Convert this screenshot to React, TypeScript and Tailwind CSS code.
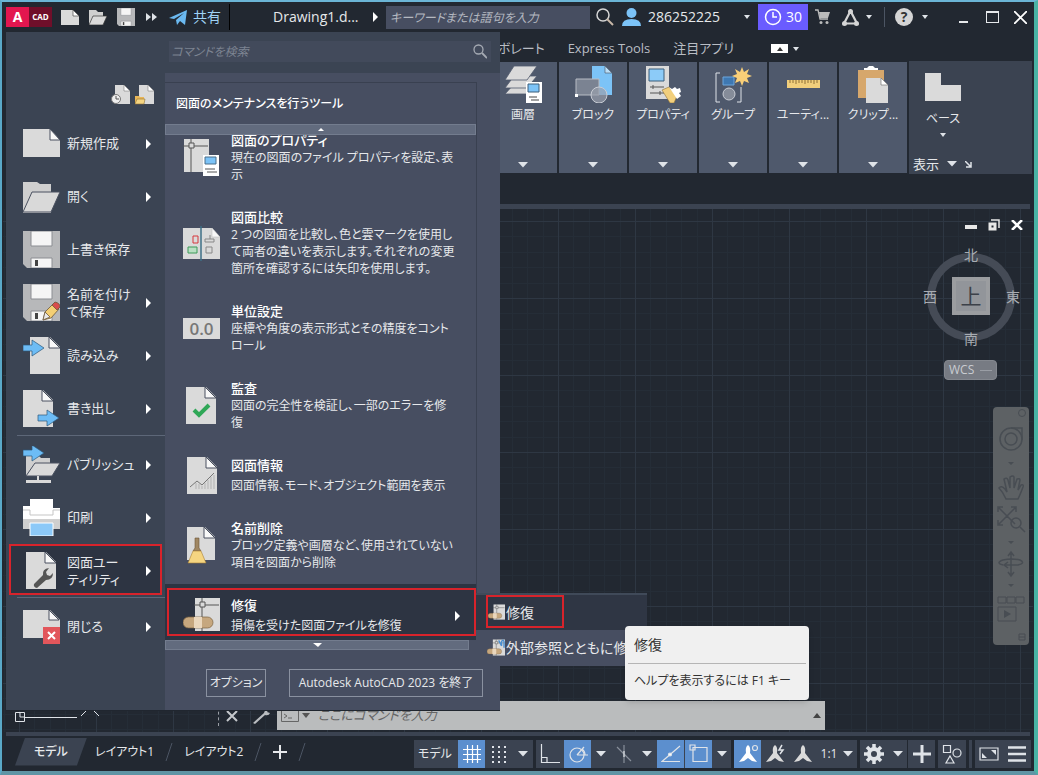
import type { ReactNode } from "react";

const RED = "pointer-events-none absolute border-2 border-[#d8232b]";

function Caret({ className = "" }: { className?: string }) {
  return (
    <svg viewBox="0 0 10 6" className={`h-[6px] w-[10px] shrink-0 ${className}`} aria-hidden="true">
      <path d="M0 0h10L5 5.5z" fill="#dfe3e8" />
    </svg>
  );
}

function SmallCaret() {
  return (
    <svg viewBox="0 0 6 4" className="h-1 w-1.5 shrink-0" aria-hidden="true">
      <path d="M0 0h6L3 4z" fill="#dfe3e8" />
    </svg>
  );
}

function Arrow({ className = "" }: { className?: string }) {
  return (
    <svg viewBox="0 0 5 10" className={`h-[10px] w-[5px] shrink-0 ${className}`} aria-hidden="true">
      <path d="M0 0l5 5-5 5z" fill="#fff" />
    </svg>
  );
}

function Svg({ size = 37, children }: { size?: number; children: ReactNode }) {
  return (
    <svg width={size} height={size} viewBox="0 0 37 37" className="shrink-0" aria-hidden="true">
      {children}
    </svg>
  );
}

/* Portrait sheet with a folded corner, shared by many icons */
function Sheet({ x = 3 }: { x?: number }) {
  return (
    <g transform={`translate(${x} 0)`}>
      <path d="M0 0h20l10 10v27H0z" fill="#dadada" />
      <path d="M19 0v11h11z" fill="#f8f8f8" stroke="#4a5160" strokeWidth="1" />
    </g>
  );
}

function NewIcon() {
  return (
    <Svg>
      <path d="M0 4h27l10 11v17H0z" fill="#dadada" />
      <path d="M27 4v11h10z" fill="#f8f8f8" stroke="#4a5160" />
    </Svg>
  );
}

function OpenIcon() {
  return (
    <Svg>
      <path d="M0 4h14l3 2h11v29H0z" fill="#cfcfcf" />
      <path d="M9 14h28l-9 20H0z" fill="#d9d9d9" stroke="#4a5160" />
    </Svg>
  );
}

function Disk() {
  return (
    <>
      <path d="M0 0h37v37H4l-4-4z" fill="#b7b8ba" />
      <path d="M8 0h21v15H8zM8 27h21v10H8z" fill="#f5f5f5" stroke="#8b8d92" />
      <path d="M12 29h3v6h-3z" fill="#444" />
    </>
  );
}

function Pencil() {
  return (
    <g stroke="#6b5638" strokeWidth=".8">
      <path d="M20 36l2-8 8-8 6 5-8 9z" fill="#f4cf73" />
      <path d="M20 36l2-8 5 5z" fill="#e9e9e9" />
      <path d="M29 21l3-3q5 1 5 5l-3 3z" fill="#d84b4b" />
    </g>
  );
}

function BlueArrow({ x, y }: { x: number; y: number }) {
  return (
    <path
      d="M0 5h9V0l12 8-12 8v-5H0z"
      transform={`translate(${x} ${y})`}
      fill="#6dbcf5"
      stroke="#2d5878"
      strokeWidth=".7"
    />
  );
}

function ImportIcon() {
  return (
    <Svg>
      <Sheet x={7} />
      <BlueArrow x={0} y={3} />
    </Svg>
  );
}

function ExportIcon() {
  return (
    <Svg>
      <Sheet x={0} />
      <BlueArrow x={15} y={20} />
    </Svg>
  );
}

function PublishIcon() {
  return (
    <Svg>
      <path d="M3 10h13l2 2h9v18H3z" fill="#cfcfcf" />
      <path d="M12 17h25l-8 13H3z" fill="#d9d9d9" stroke="#4a5160" />
      <path d="M3 34h25v3H3zM14 30h2v5h-2z" fill="#dadada" />
      <BlueArrow x={0} y={-1} />
    </Svg>
  );
}

function PrintIcon() {
  return (
    <Svg>
      <path d="M7 0h23v9h7v21H0V7h7z" fill="#fff" />
      <path d="M0 20h37v10H0z" fill="#cfcfcf" />
      <path d="M0 11h7v5h23v-5h7" fill="none" stroke="#c5c5c5" />
      <path d="M7 24h23v13H7z" fill="#8cc9f8" stroke="#fff" />
    </Svg>
  );
}

function WrenchIcon() {
  return (
    <Svg>
      <Sheet />
      <path d="M11 32l9-9q-1-6 6-7l-3 4 1 3 3 1 3-3q0 7-7 7l-9 8q-4-1-3-4z" fill="#555" />
    </Svg>
  );
}

function CloseIcon() {
  return (
    <Svg>
      <path d="M0 2h27l10 10v18H0z" fill="#dadada" />
      <path d="M26 2v10h10z" fill="#f8f8f8" stroke="#4a5160" />
      <path d="M20 19h17v17H20z" fill="#e2565b" />
      <path d="M25 24l7 7m0-7l-7 7" stroke="#fff" strokeWidth="2" />
    </Svg>
  );
}

function Grip() {
  return (
    <>
      <path d="M8 0v33M0 7h25" stroke="#555" fill="none" />
      <path d="M6 4h5v5H6z" fill="#dadada" stroke="#555" />
    </>
  );
}

function PropsIcon() {
  return (
    <Svg>
      <path d="M1 0h25v33H1z" fill="#dadada" />
      <Grip />
      <path d="M20 16h16v21H20z" fill="#fff" />
      <path d="M22 18h11v7H22z" fill="#7cc3f7" stroke="#4b6f8a" />
      <path d="M22 30h10M24 33h10" stroke="#555" />
    </Svg>
  );
}

function CompareIcon() {
  return (
    <Svg>
      <path d="M0 3h29l8 9v22H0z" fill="#dadada" />
      <path d="M29 3v9h8z" fill="#f8f8f8" stroke="#bbb" strokeWidth=".5" />
      <path d="M18 1v35" stroke="#3e6f86" strokeWidth="1.5" />
      <path d="M10 11h5v7h-5z" fill="none" stroke="#d6363c" />
      <path d="M5 22h9v6H5z" fill="#b9dfc3" stroke="#3d9a58" />
      <path d="M22 14h9v3h-9zM23 22h6v6h-6zM27 10v4" fill="none" stroke="#888" />
    </Svg>
  );
}

function UnitsIcon() {
  return (
    <Svg>
      <path d="M0 8h37v21H0z" fill="#dadada" />
      <text x="18.5" y="25" textAnchor="middle" fontSize="17" fontWeight="600" fill="#777" fontFamily="Open Sans, sans-serif">
        0.0
      </text>
    </Svg>
  );
}

function AuditIcon() {
  return (
    <Svg>
      <Sheet />
      <path d="M11 23l5 5 10-10" fill="none" stroke="#2fa757" strokeWidth="4" />
    </Svg>
  );
}

function StatusIcon() {
  return (
    <Svg>
      <Sheet x={4} />
      <path d="M7 30l7-6 5 4 12-12" fill="none" stroke="#777" />
      <path d="M13 26v6M16 27v5M19 29v3M22 26v6M25 23v9M28 20v12M31 18v14" stroke="#aaa" strokeWidth=".8" />
    </Svg>
  );
}

function PurgeIcon() {
  return (
    <Svg>
      <path d="M4 0h18l10 10v23H4z" fill="#dadada" />
      <path d="M21 0v11h11z" fill="#f8f8f8" stroke="#4a5160" />
      <path d="M12 11h4v10l2 3h-8l2-3z" fill="#a08763" stroke="#6b5638" strokeWidth=".6" />
      <path d="M10 24h8l5 12H5z" fill="#f5d581" stroke="#a98235" strokeWidth=".6" />
    </Svg>
  );
}

function RepairIcon({ size = 37, linked = false }: { size?: number; linked?: boolean }) {
  return (
    <Svg size={size}>
      <path d="M12 1h25v33H12z" fill="#dadada" />
      <g transform="translate(11 1)">
        <Grip />
      </g>
      {linked && <path d="M24 3l6 11V5q4-5 5 1v12" fill="none" stroke="#4b8fd0" strokeWidth="3" />}
      <rect y="20" width="30" height="11" rx="5.5" fill="#c6a77e" stroke="#7a6140" strokeWidth=".7" />
      <path d="M11 20h8v11h-8z" fill="#ead7bd" />
    </Svg>
  );
}

type Entry = { label: string; icon: ReactNode; arrow?: boolean; active?: boolean };

const menuGroups: Entry[][] = [
  [
    { label: "新規作成", icon: <NewIcon />, arrow: true },
    { label: "開く", icon: <OpenIcon />, arrow: true },
    { label: "上書き保存", icon: <Svg><Disk /></Svg> },
    { label: "名前を付け\nて保存", icon: <Svg><Disk /><Pencil /></Svg>, arrow: true },
    { label: "読み込み", icon: <ImportIcon />, arrow: true },
    { label: "書き出し", icon: <ExportIcon />, arrow: true },
  ],
  [
    { label: "パブリッシュ", icon: <PublishIcon />, arrow: true },
    { label: "印刷", icon: <PrintIcon />, arrow: true },
    { label: "図面ユー\nティリティ", icon: <WrenchIcon />, arrow: true, active: true },
  ],
  [{ label: "閉じる", icon: <CloseIcon />, arrow: true }],
];

const tools = [
  { title: "図面のプロパティ", text: "現在の図面のファイル プロパティを設定、表\n示", icon: <PropsIcon /> },
  {
    title: "図面比較",
    text: "2 つの図面を比較し、色と雲マークを使用し\nて両者の違いを表示します。それぞれの変更\n箇所を確認するには矢印を使用します。",
    icon: <CompareIcon />,
  },
  { title: "単位設定", text: "座標や角度の表示形式とその精度をコント\nロール", icon: <UnitsIcon /> },
  { title: "監査", text: "図面の完全性を検証し、一部のエラーを修\n復", icon: <AuditIcon /> },
  { title: "図面情報", text: "図面情報、モード、オブジェクト範囲を表示", icon: <StatusIcon /> },
  { title: "名前削除", text: "ブロック定義や画層など、使用されていない\n項目を図面から削除", icon: <PurgeIcon /> },
  { title: "修復", text: "損傷を受けた図面ファイルを修復", icon: <RepairIcon />, active: true },
];

const panels = [
  {
    label: "画層",
    icon: (
      <Svg>
        <g fill="#dadada" stroke="#4f596c" strokeWidth=".8">
          <path d="M0 28L9 18h23l-10 10z" />
          <path d="M0 22L9 10h23L22 22z" />
          <path d="M0 14L9 0h23L22 14z" />
        </g>
        <path d="M21 16h16v21H21z" fill="#fff" />
        <path d="M23 18h11v8H23z" fill="#7cc3f7" stroke="#3c5f7a" />
        <path d="M24 31h8M26 34h8" stroke="#444" />
      </Svg>
    ),
  },
  {
    label: "ブロック",
    icon: (
      <Svg>
        <path d="M17 0h13l7 7v22H17z" fill="#7cc3f7" />
        <path d="M30 0v7h7z" fill="#b9def8" stroke="#4a5160" strokeWidth=".6" />
        <path d="M1 13h23v16H1z" fill="#7b8392" stroke="#b8bcc4" />
        <circle cx="24" cy="29" r="8" fill="#9aa0ac" fillOpacity=".7" stroke="#c8ccd4" />
        <path d="M0 28h3v3H0z" fill="#fff" />
      </Svg>
    ),
  },
  {
    label: "プロパティ",
    icon: (
      <Svg>
        <path d="M1 0h23v33H1z" fill="#dadada" />
        <path d="M4 3h15v12H4z" fill="#8ccbf8" stroke="#3c5f7a" />
        <path d="M5 21h14M8 19v4M5 27h14M15 25v4" stroke="#555" />
        <path d="M17 24l7-3 8 9-3 7h-4z" fill="#f2cf7c" stroke="#8f7136" strokeWidth=".6" />
        <path d="M24 21l3 2 3-2 2 2 3-1 1 4-2 1 2 3-4 3z" fill="#fff" />
      </Svg>
    ),
  },
  {
    label: "グループ",
    icon: (
      <Svg>
        <path d="M5 7H1v29h4M22 36h4V21" fill="none" stroke="#dfe3e8" />
        <path d="M8 11h11v8H8z" fill="#3e78b2" stroke="#6da6dc" />
        <circle cx="14" cy="28" r="6" fill="#858c99" stroke="#c8ccd4" />
        <path
          d="M27 1l2 5 5-3-2 5 5 2-5 2 2 5-5-2-2 5-2-5-5 2 2-5-5-2 5-2-2-5 5 3z"
          fill="#f9cf78"
        />
      </Svg>
    ),
  },
  {
    label: "ユーティ...",
    icon: (
      <Svg>
        <path d="M2 14h33v8H2z" fill="#f2cf7c" />
        <path d="M5 14v3M8 14v3M11 14v4M14 14v3M17 14v3M20 14v4M23 14v3M26 14v3M29 14v4M32 14v3" stroke="#8f7136" />
      </Svg>
    ),
  },
  {
    label: "クリップ...",
    icon: (
      <Svg>
        <path d="M4 4h26v28H4z" fill="#d6a76c" />
        <path d="M10 4V2h3l2-2h4l2 2h3v2z" fill="#fff" />
        <path d="M12 12h15l7 7v18H12z" fill="#dadada" />
        <path d="M27 12v7h7z" fill="#fff" stroke="#666" strokeWidth=".6" />
      </Svg>
    ),
  },
];

function TitleBar() {
  return (
    <header className="flex h-[30px] items-center pl-1 pr-[7px] text-sm text-[#e6e8eb]">
      <button aria-label="AutoCAD" className="flex h-5 w-[46px] shrink-0 items-center bg-[#6f0f2a] font-bold text-white">
        <span className="flex h-5 w-[23px] items-center justify-center bg-[#e3164f] text-sm">A</span>
        <span className="flex-1 text-center text-[8px]">CAD</span>
      </button>
      <button aria-label="新規" className="ml-[9px] shrink-0">
        <svg width="18" height="15" viewBox="0 0 18 15"><path d="M0 0h12l6 6v9H0z" fill="#dadada" /><path d="M12 0v6h6z" fill="#fff" stroke="#333" strokeWidth=".6" /></svg>
      </button>
      <button aria-label="ファイルを開く" className="ml-[10px] shrink-0">
        <svg width="18" height="15" viewBox="0 0 18 15"><path d="M0 0h7l2 2h5v13H0z" fill="#cfcfcf" /><path d="M4 6h14l-4 9H0z" fill="#dadada" stroke="#333" strokeWidth=".7" /></svg>
      </button>
      <button aria-label="保存" className="ml-[10px] shrink-0"><Svg size={18}><Disk /></Svg></button>
      <button aria-label="さらに表示" className="ml-[11px] shrink-0">
        <svg width="11" height="8" viewBox="0 0 11 8"><path d="M0 0l5 4-5 4zM6 0l5 4-5 4z" fill="#dfe3e8" /></svg>
      </button>
      <button className="ml-3 flex shrink-0 items-center gap-1.5 text-[#9fd2f5]">
        <svg width="18" height="15" viewBox="0 0 18 15" aria-hidden="true"><path d="M0 8L18 0l-2 15-5-4-3 4-1-5L15 3 5 9z" fill="#6bb9f0" /></svg>
        共有
      </button>
      <span className="ml-2 h-[26px] w-px shrink-0 bg-black" />
      <span className="ml-[43px] w-[86px] shrink-0">Drawing1.d...</span>
      <Arrow className="ml-3.5" />
      <input
        aria-label="キーワード検索"
        placeholder="キーワードまたは語句を入力"
        className="ml-2 h-[23px] min-w-0 flex-1 bg-[#474e61] px-1 text-xs italic outline-none placeholder:text-[#b4b8c0]"
      />
      <button aria-label="検索" className="ml-1.5 shrink-0">
        <svg width="18" height="18" viewBox="0 0 18 18" fill="none"><circle cx="7" cy="7" r="6" stroke="#d5d5d5" strokeWidth="1.5" /><path d="M11 11l6 6" stroke="#c8b8a8" strokeWidth="2" /></svg>
      </button>
      <button className="ml-2 flex w-32 shrink-0 items-center gap-[7px]">
        <svg width="19" height="18" viewBox="0 0 19 18" aria-hidden="true"><circle cx="9.500" cy="5" r="5" fill="#7cc3f7" /><path d="M0 18q0-7 9.500-7T19 18z" fill="#7cc3f7" /></svg>
        286252225
        <span className="ml-auto"><SmallCaret /></span>
      </button>
      <button className="ml-2 flex h-[26px] w-[50px] shrink-0 items-center justify-center gap-1 bg-[#6a5cff] text-white">
        <svg width="18" height="18" viewBox="0 0 18 18" fill="none" stroke="#fff" strokeWidth="1.5" aria-hidden="true"><circle cx="9" cy="9" r="7.500" /><path d="M9 4v5h4" /></svg>
        30
      </button>
      <button aria-label="ストア" className="ml-[7px] shrink-0">
        <svg width="15" height="16" viewBox="0 0 15 16"><path d="M0 1h3l2 9h8" fill="none" stroke="#bbb" strokeWidth="1.3" /><path d="M4 3h11l-2 6H5z" fill="#bbb" /><circle cx="6" cy="13.500" r="1.500" fill="#bbb" /><circle cx="12" cy="13.500" r="1.500" fill="#bbb" /></svg>
      </button>
      <button aria-label="Autodesk App" className="ml-3 flex shrink-0 items-center gap-[7px]">
        <svg width="17" height="17" viewBox="0 0 17 17"><path d="M8.500 2L2 14.500h13z" fill="none" stroke="#d5d5d5" strokeWidth="2.200" /><circle cx="8.500" cy="2.500" r="2.500" fill="#d5d5d5" /><circle cx="2.500" cy="14.500" r="2.500" fill="#d5d5d5" /><circle cx="14.500" cy="14.500" r="2.500" fill="#d5d5d5" /></svg>
        <SmallCaret />
      </button>
      <span className="ml-3 h-5 w-px shrink-0 bg-[#4c5563]" />
      <button aria-label="ヘルプ" className="ml-2.5 flex shrink-0 items-center gap-[9px]">
        <span className="flex size-[18px] items-center justify-center rounded-full bg-[#d5d5d5] text-sm font-bold text-[#333]">?</span>
        <SmallCaret />
      </button>
      <button aria-label="最小化" className="ml-[31px] mt-2.5 h-[2px] w-[9px] shrink-0 bg-[#e6e8eb]" />
      <button aria-label="最大化" className="ml-[18px] h-3 w-[13px] shrink-0 border border-t-2 border-[#e6e8eb]" />
      <button aria-label="閉じる" className="ml-[15px] shrink-0">
        <svg width="13" height="13" viewBox="0 0 13 13"><path d="M0 0l13 13M13 0L0 13" stroke="#fff" strokeWidth="1.800" /></svg>
      </button>
    </header>
  );
}

function Ribbon() {
  return (
    <section>
      <nav className="flex h-[29px] items-center justify-end pr-[235px] pt-1 text-[13px] text-[#b9bdc4]">
        <a href="#collaborate">コラボレート</a>
        <a href="#express" className="ml-[23px]">Express Tools</a>
        <a href="#apps" className="ml-[23px]">注目アプリ</a>
        <button aria-label="リボンを最小化" className="ml-[37px] flex items-center gap-[5px]">
          <span className="flex h-[9px] w-[17px] items-center justify-center bg-white">
            <svg width="6" height="4" viewBox="0 0 6 4"><path d="M0 4h6L3 0z" fill="#333" /></svg>
          </span>
          <SmallCaret />
        </button>
      </nav>
      <div className="ml-1 mr-0.5 flex h-[113px] justify-end bg-[#3b4351] text-xs text-[#e6e8eb]">
        <div className="flex gap-0.5 bg-[#222831] px-0.5 pb-px pt-px">
          {panels.map((p) => (
            <div key={p.label} className="flex w-[68px] flex-col items-center bg-[#4f596c] pt-1">
              <button className="flex flex-col items-center">
                {p.icon}
                <span className="mt-0.5 whitespace-nowrap leading-5">{p.label}</span>
              </button>
              <button aria-label={`${p.label} パネル`} className="mb-[5px] mt-auto">
                <Caret />
              </button>
            </div>
          ))}
        </div>
        <div className="flex w-[123px] flex-col pl-1 pt-3">
          <button className="ml-3 flex w-9 flex-col items-center">
            <svg width="36" height="28" viewBox="0 0 36 28" aria-hidden="true"><path d="M0 0h16v12h20v16H0z" fill="#dadada" /></svg>
            <span className="mt-2 whitespace-nowrap leading-5">ベース</span>
            <span className="mt-1"><SmallCaret /></span>
          </button>
          <div className="mt-auto flex items-center gap-2 pb-0.5 text-[13px] leading-4">
            表示
            <Caret />
            <svg width="7" height="7" viewBox="0 0 7 7" fill="none" stroke="#dfe3e8" strokeWidth="1.500" aria-hidden="true"><path d="M0 0l6 6M6 1v5H1" /></svg>
          </div>
        </div>
      </div>
      <div className="h-[30px]" />
      <div className="mx-1 h-[5px] bg-[#3b4351]" />
    </section>
  );
}

function GridLines() {
  return (
    <svg className="absolute inset-0 h-full w-full" aria-hidden="true">
      <defs>
        <pattern id="grid" x="16" y="12" width="77" height="77" patternUnits="userSpaceOnUse">
          <path d="M15.500 0v77M31.500 0v77M46.500 0v77M62.500 0v77M0 15.500h77M0 31.500h77M0 46.500h77M0 62.500h77" stroke="#252d37" />
          <path d="M.5 0v77M0 .5h77" stroke="#2e3743" />
        </pattern>
      </defs>
      <rect width="100%" height="100%" fill="url(#grid)" />
    </svg>
  );
}

function ViewCube() {
  return (
    <svg width="100" height="104" viewBox="0 0 100 104" fontSize="14" fill="#a9adb3" textAnchor="middle" aria-label="ViewCube">
      <circle cx="50" cy="52" r="40" fill="none" stroke="#454b56" strokeWidth="8" />
      <path d="M31 32h38v38H31z" fill="#9b9da0" />
      <path d="M35 36h30v30H35z" fill="#92959a" />
      <text x="50" y="59" fontSize="21" fill="#3c4149">上</text>
      <text x="50" y="15">北</text>
      <text x="50" y="99">南</text>
      <text x="9" y="57">西</text>
      <text x="92" y="57">東</text>
    </svg>
  );
}

function NavBar() {
  return (
    <svg width="36" height="238" viewBox="0 0 36 238" fill="none" stroke="#484d53" strokeWidth="1.500" aria-label="ナビゲーション バー">
      <rect width="36" height="238" rx="4" fill="#5d6164" stroke="none" />
      <circle cx="29" cy="6" r="3.500" strokeWidth="1" />
      <circle cx="18" cy="32" r="11" />
      <circle cx="18" cy="32" r="6" />
      <path d="M18 21h11v12" />
      <path d="M15 55h6l-3 3zM15 134h6l-3 3zM15 177h6l-3 3z" fill="#484d53" stroke="none" />
      <path d="M13 92q-3-7-7-11 2-3 6 1l2 3-3-13q3-2 4 1l2 8V70q3-2 4 0v11l3-9q3-1 3 1l-2 10 3-5q3-1 2 2-3 8-5 12z" />
      <path d="M6 101l16 16M22 101L6 117M5 105v-5h5M18 100h5v5M5 113v5h5" />
      <circle cx="23" cy="116" r="5" />
      <path d="M27 120l5 5" />
      <path d="M18 146v22M15 149l3-4 3 4M15 165l3 4 3-4M10 158q-8-2 0-5 9-2 17 0 6 3-2 5H12m3-3l-4 3 4 3" />
      <path d="M5 190h8v6H5zM14 190h8v6h-8zM23 190h8v6h-8zM5 200h18v14H5z" strokeWidth="1" />
      <path d="M11 203v8l7-4z" fill="#484d53" stroke="none" />
      <path d="M26 227h6v6h-6zM26 230h6" strokeWidth="1" />
    </svg>
  );
}

function Canvas() {
  return (
    <main className="relative mx-px flex flex-1 flex-col">
      <GridLines />
      <div className="relative flex flex-col items-end pr-1">
        <div className="mr-1.5 mt-[10px] flex items-center gap-[11px]">
          <button aria-label="ビューを最小化" className="mt-1 h-1 w-3 bg-[#e8e8e8]" />
          <button aria-label="ビューを元に戻す">
            <svg width="12" height="12" viewBox="0 0 12 12" fill="none" stroke="#e8e8e8"><path d="M2 5h5v5H2z" strokeWidth="3" /><path d="M3 1h8v8" strokeWidth="1.500" /></svg>
          </button>
          <button aria-label="ビューを閉じる">
            <svg width="12" height="10" viewBox="0 0 12 10"><path d="M1 0l10 10M11 0L1 10" stroke="#fff" strokeWidth="2.500" /></svg>
          </button>
        </div>
        <div className="mr-2 mt-3.5"><ViewCube /></div>
        <button className="mr-8 mt-[11px] flex h-5 w-[53px] items-center gap-1.5 rounded border border-[#84888f] bg-[#777b83] px-1 text-xs text-[#c9ccd1]">
          WCS
          <span className="h-px w-3 bg-[#9a9ea5]" />
        </button>
        <div className="mt-[27px]"><NavBar /></div>
      </div>
      <div className="relative mb-0.5 mt-auto flex h-[29px] items-center pl-[11px] text-[13px]">
        <svg width="88" height="29" viewBox="0 0 88 29" fill="none" stroke="#dfe3e8" aria-hidden="true">
          <path d="M1.500 11.500h9v9h-9zM6 11v5h5M11 16.500h52M67 15l9-9 9 9" />
        </svg>
        <span className="ml-[116px] h-5 border-l border-dashed border-[#9a9ea5]" />
        <button aria-label="コマンドを閉じる" className="ml-[7px]">
          <svg width="12" height="12" viewBox="0 0 12 12"><path d="M1 1l10 10M11 1L1 11" stroke="#c5c8cc" strokeWidth="2" /></svg>
        </button>
        <button aria-label="カスタマイズ" className="ml-3.5">
          <svg width="18" height="16" viewBox="0 0 18 16"><path d="M1 15L12 5q1-4 5-4l-2 3 3 1q-1 3-5 2L3 16z" fill="#b9bcc0" /></svg>
        </button>
        <label className="ml-[7px] mr-52 flex h-full flex-1 items-center bg-[#babcbd] pl-1 pr-1">
          <svg width="29" height="14" viewBox="0 0 29 14" fill="none" stroke="#666" aria-hidden="true"><path d="M.5 1.500h17v11H.5zM3 5l3 2-3 2M7 9h4" /><path d="M21 4h8l-4 5z" fill="#555" stroke="none" /></svg>
          <input aria-label="コマンド" placeholder="ここにコマンドを入力" className="ml-2 min-w-0 flex-1 bg-transparent italic outline-none placeholder:text-[#666]" />
          <svg width="8" height="5" viewBox="0 0 8 5" aria-hidden="true"><path d="M0 5h8L4 0z" fill="#444" /></svg>
        </label>
      </div>
    </main>
  );
}

function StatusButton({
  label,
  on,
  className = "w-7",
  children,
}: {
  label: string;
  on?: boolean;
  className?: string;
  children: ReactNode;
}) {
  return (
    <button
      aria-label={label}
      className={`flex h-7 shrink-0 items-center justify-center ${on ? "bg-[#5c8fce]" : ""} ${className}`}
    >
      {children}
    </button>
  );
}

function Glyph({ children }: { children: ReactNode }) {
  return (
    <svg width="20" height="20" viewBox="0 0 20 20" fill="none" stroke="#dfe3e8" strokeWidth="1.200" className="shrink-0" aria-hidden="true">
      {children}
    </svg>
  );
}

const person = "M10 1q3 2 2 8l7 9-5-1-4-3-4 3-5 1 7-9q-1-6 2-8z";

function StatusBar() {
  const group = "flex h-7 items-center bg-[#3b4351]";
  const slash = (
    <svg width="8" height="18" viewBox="0 0 8 18" aria-hidden="true"><path d="M7 0L1 18" stroke="#4c5563" /></svg>
  );
  return (
    <footer className="flex h-[35px] items-center pl-[13px] pr-[3px] text-xs text-[#e6e8eb]">
      <button className="-mt-1 h-7 w-[72px] shrink-0 bg-[#3b4351] font-medium [clip-path:polygon(14%_0,100%_0,86%_100%,0_100%)]">モデル</button>
      <div className="-mt-1 flex shrink-0 items-center gap-[11px] whitespace-nowrap pl-2">
        <button>レイアウト1</button>
        {slash}
        <button>レイアウト2</button>
        {slash}
        <button aria-label="新規レイアウト">
          <svg width="14" height="14" viewBox="0 0 14 14"><path d="M7 0v14M0 7h14" stroke="#e6e8eb" strokeWidth="2" /></svg>
        </button>
        {slash}
      </div>
      <div className="ml-auto flex shrink-0 items-center gap-[3px]">
        <div className={group}>
          <StatusButton label="モデル空間" className="mr-0.5 w-[42px]">モデル</StatusButton>
          <StatusButton label="グリッド" on className="w-[27px]">
            <Glyph><path d="M5.500 1v18M10.500 1v18M15.500 1v18M1 5.500h18M1 10.500h18M1 15.500h18" stroke="#fff" /></Glyph>
          </StatusButton>
          <StatusButton label="スナップ">
            <Glyph><path d="M3 3h14M3 8h14M3 13h14M3 18h14" strokeWidth="2" strokeDasharray="2 4" /></Glyph>
          </StatusButton>
          <StatusButton label="スナップ設定" className="w-5"><Caret /></StatusButton>
        </div>
        <div className={group}>
          <StatusButton label="直交モード"><Glyph><path d="M1.500 0v18.500H20M1 13.500h6v5" /></Glyph></StatusButton>
          <StatusButton label="極トラッキング" on className="w-[27px]">
            <Glyph><circle cx="9" cy="11" r="7" /><path d="M9 11L16 3M9 11h11M14 5q3 2 3 6" /></Glyph>
          </StatusButton>
          <StatusButton label="極設定" className="w-5"><Caret /></StatusButton>
          <StatusButton label="アイソメ" className="w-[26px]">
            <Glyph><path d="M10 1v18M3 3l14 14" stroke="#888f9a" /><path d="M10 7v6" /></Glyph>
          </StatusButton>
          <StatusButton label="アイソメ設定" className="w-5"><Caret /></StatusButton>
          <StatusButton label="スナップ トラッキング" on className="mr-px w-[27px]">
            <Glyph><path d="M19 2L1 17.500h18" /><circle cx="9" cy="10.500" r="1.500" fill="#fff" /></Glyph>
          </StatusButton>
          <StatusButton label="オブジェクト スナップ" on className="w-[27px]">
            <Glyph><path d="M4 3.500h14v14H4zM1 1h5v5H1z" /></Glyph>
          </StatusButton>
          <StatusButton label="スナップ一覧" className="w-[19px]"><Caret /></StatusButton>
        </div>
        <div className={group}>
          <StatusButton label="注釈の表示" on className="w-[27px]">
            <Glyph><path d={person} fill="#fff" stroke="none" /><circle cx="17" cy="4" r="2.500" /></Glyph>
          </StatusButton>
          <StatusButton label="自動尺度">
            <Glyph><path d={person} fill="#dadada" stroke="none" /><path d="M17 1l-3 5h4l-3 4" strokeWidth="1.500" /></Glyph>
          </StatusButton>
          <StatusButton label="注釈尺度"><Glyph><path d={person} fill="#dadada" stroke="none" /></Glyph></StatusButton>
          <StatusButton label="尺度 1:1" className="w-10 gap-1.5">1:1<Caret /></StatusButton>
        </div>
        <div className={group}>
          <StatusButton label="ワークスペース">
            <Glyph>
              <circle cx="10" cy="10" r="5" strokeWidth="4" />
              <path d="M10 0v4M10 16v4M0 10h4M16 10h4M3 3l3 3M14 14l3 3M17 3l-3 3M6 14l-3 3" strokeWidth="3.500" />
            </Glyph>
          </StatusButton>
          <StatusButton label="ワークスペース一覧" className="w-[19px]"><Caret /></StatusButton>
          <StatusButton label="注釈モニター" className="w-7 border-l border-[#222831]">
            <Glyph><path d="M10 1v18M1 10h18" strokeWidth="3" /></Glyph>
          </StatusButton>
        </div>
        <div className={group}>
          <StatusButton label="選択表示">
            <Glyph><path d="M1.500 1.500h7v7h-7zM8 12l4 7H4z" /><circle cx="15" cy="9" r="4" /></Glyph>
          </StatusButton>
        </div>
        <span className="h-7 w-[3px] bg-[#3b4351]" />
        <div className={group}>
          <StatusButton label="フルスクリーン">
            <Glyph><path d="M1 4h18v12H1z" /><path d="M3 14v-5l5 5zM17 6v5l-5-5z" fill="#dfe3e8" stroke="none" /></Glyph>
          </StatusButton>
          <StatusButton label="カスタマイズ"><Glyph><path d="M1 3.500h18M1 10h18M1 16.500h18" strokeWidth="2.500" /></Glyph></StatusButton>
        </div>
      </div>
    </footer>
  );
}

function ApplicationMenu() {
  return (
    <div className="absolute left-1 top-[30px] w-[494px] border-b border-[#20262f] bg-[#3b4453] text-[13px] leading-[17px] text-[#e6e8eb]">
      <div className="flex h-[41px] items-start pl-[163px] pr-[9px] pt-[9px]">
        <label className="flex h-[21px] flex-1 items-center bg-[#424a5b] pr-1">
          <input aria-label="コマンドを検索" placeholder="コマンドを検索" className="min-w-0 flex-1 bg-transparent pl-0.5 text-xs italic outline-none placeholder:text-[#7d8492]" />
          <svg width="14" height="15" viewBox="0 0 14 15" fill="none" stroke="#a5aab3" aria-hidden="true"><circle cx="5.500" cy="5.500" r="4.500" strokeWidth="1.300" /><path d="M9 9l5 5" strokeWidth="1.800" /></svg>
        </label>
      </div>
      <div className="flex">
        <div className="w-[159px] shrink-0">
          <div className="flex justify-end gap-[5px] pb-3 pr-[11px] pt-3">
            <button aria-label="最近使用したドキュメント">
              <svg width="19" height="20" viewBox="0 0 19 20"><path d="M4 0h9l6 6v13H4z" fill="#dadada" /><path d="M13 0v6h6z" fill="#fff" stroke="#666" strokeWidth=".5" /><circle cx="5" cy="14" r="4.500" fill="#eee" stroke="#777" /><path d="M5 11v3h3" stroke="#555" fill="none" /></svg>
            </button>
            <button aria-label="開いているドキュメント">
              <svg width="19" height="20" viewBox="0 0 19 20"><path d="M4 0h9l6 6v13H4z" fill="#dadada" /><path d="M13 0v6h6z" fill="#fff" stroke="#666" strokeWidth=".5" /><path d="M0 11h4l1 1h4v7H0z" fill="#e8b657" /><path d="M2 14h8l-1 5H0z" fill="#f5d581" stroke="#8f7136" strokeWidth=".6" /></svg>
            </button>
          </div>
          {menuGroups.map((items, i) => (
            <div key={i} className={i > 0 ? "-mr-px ml-[11px] border-t border-[#5d6778] pt-0.5" : "-mr-px ml-[11px]"}>
              {items.map((item) => (
                <button key={item.label} className="relative -ml-2 flex h-[53px] w-[153px] items-center pl-[14px] pr-[11px] text-left">
                  {item.active && (
                    <>
                      <span className="absolute inset-x-0 bottom-0.5 top-0 bg-[#2d3442]" />
                      <span className={`${RED} inset-x-0 bottom-0.5 top-0`} />
                    </>
                  )}
                  <span className="relative flex flex-1 items-center gap-[7px] whitespace-pre">
                    {item.icon}
                    {item.label}
                  </span>
                  {item.arrow && <Arrow className="relative" />}
                </button>
              ))}
            </div>
          ))}
        </div>
        <div className="min-w-0 flex-1 bg-[#474e61] pt-[9px]">
          <div className="mr-[23px] border-r border-t border-[#394050]">
            <h2 className="flex h-[41px] items-center pl-[11px] text-xs font-medium text-white">図面のメンテナンスを行うツール</h2>
            <button aria-label="上にスクロール" className="flex h-[11px] w-full items-center justify-center border border-[#737c8e] bg-[#626b7e]">
              <svg width="6" height="3" viewBox="0 0 6 3"><path d="M0 3h6L3 0z" fill="#fff" /></svg>
            </button>
            <div className="h-[505px] overflow-hidden">
              <ul className="-mt-4">
                {tools.map((t) => (
                  <li key={t.title}>
                    <button className={`relative flex min-h-[63px] w-full gap-[11px] py-[13px] pl-[18px] pr-4 text-left ${t.active ? "bg-[#2d3442]" : ""}`}>
                      <span className="flex items-center self-center">{t.icon}</span>
                      <span className="flex min-w-0 flex-1 flex-col justify-between self-stretch whitespace-pre">
                        <span className="font-medium text-white">{t.title}</span>
                        <span className="text-xs leading-[17px]">{t.text}</span>
                      </span>
                      {t.active && <Arrow className="self-center" />}
                      {t.active && <span className={`${RED} bottom-[11px] left-0.5 right-0 top-1`} />}
                    </button>
                  </li>
                ))}
              </ul>
            </div>
          </div>
          <button aria-label="下にスクロール" className="flex h-[10px] w-[304px] items-center justify-center border border-[#737c8e] bg-[#626b7e]">
            <svg width="9" height="4" viewBox="0 0 9 4"><path d="M0 0h9L5 4z" fill="#fff" /></svg>
          </button>
          <div className="flex items-center justify-end gap-[23px] pb-[13px] pr-[17px] pt-[19px]">
            <button className="h-7 w-[60px] whitespace-nowrap border border-[#8a91a0] text-xs">オプション</button>
            <button className="h-7 w-[194px] whitespace-nowrap border border-[#8a91a0] text-xs">Autodesk AutoCAD 2023 を終了</button>
          </div>
        </div>
      </div>

      <div className="absolute left-[470px] top-[561px] w-[171px] border-t-2 border-[#404a59] bg-[#474e61] text-sm">
        <button className="relative flex h-[35px] w-full items-center gap-px bg-[#2f3644] pl-3 text-left">
          <RepairIcon size={17} />
          修復
          <span className={`${RED} bottom-0.5 left-[10px] top-0 w-[78px]`} />
        </button>
        <button className="flex h-9 w-full items-center gap-px overflow-hidden whitespace-nowrap pl-[11px] text-left">
          <RepairIcon size={18} linked />
          外部参照とともに修復
        </button>
        <div role="tooltip" className="absolute left-[149px] top-[31px] w-[184px] rounded-sm bg-[#f0f0f0] px-[3px] pb-[3px] text-[#333] shadow-md">
          <p className="border-b border-[#b5b5b5] py-2.5 pl-1.5 leading-[17px]">修復</p>
          <p className="whitespace-nowrap py-2 pl-1.5 text-xs leading-[17px]">ヘルプを表示するには F1 キー</p>
        </div>
      </div>
    </div>
  );
}

export default function App() {
  return (
    <div className="relative flex min-h-screen flex-col overflow-hidden border-2 border-b-4 border-r-[4px] border-b-[#5f95a5] border-l-[#5aa9c8] border-r-[#49b3a4] border-t-[#6bb5d6] bg-[#222831] font-['Open_Sans','Noto_Sans_CJK_JP',sans-serif] [font-feature-settings:'palt']">
      <TitleBar />
      <Ribbon />
      <Canvas />
      <div className="mx-1 h-1 bg-[#3b4351]" />
      <StatusBar />
      <ApplicationMenu />
    </div>
  );
}
